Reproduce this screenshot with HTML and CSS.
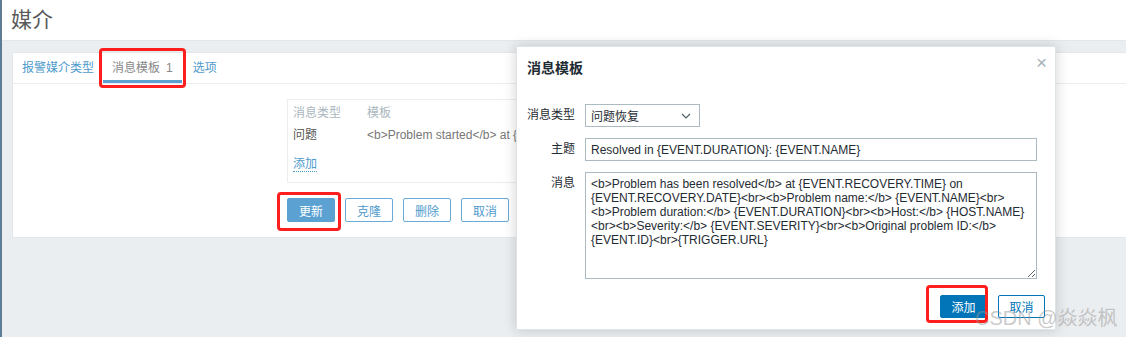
FILE: index.html
```html
<!DOCTYPE html>
<html lang="zh">
<head>
    <meta charset="UTF-8">
    <meta name="viewport" content="width=device-width, initial-scale=1.0">
    <title>媒介</title>
    <link rel="stylesheet" href="styles.css">
</head>
<body>
<div class="app">
    <header class="page-header">
        <h1>媒介</h1>
    </header>

    <main class="page">
        <section class="card">
            <nav class="tabs">
                <a class="tab">报警媒介类型</a>
                <a class="tab active">消息模板<span class="tab-count">1</span></a>
                <a class="tab">选项</a>
            </nav>
            <div class="tab-body">
                <div class="tpl-list">
                    <div class="tpl-row head">
                        <span class="col-type">消息类型</span>
                        <span>模板</span>
                    </div>
                    <div class="tpl-row">
                        <span class="col-type">问题</span>
                        <span class="tpl-text">&lt;b&gt;Problem started&lt;/b&gt; at {EVENT.TIME} on {EVENT.DATE}&lt;br&gt;&lt;b&gt;Problem name:&lt;/b&gt; {EVENT.NAME}</span>
                    </div>
                    <div class="tpl-add"><a class="link-dotted">添加</a></div>
                </div>
                <div class="actions">
                    <button class="btn primary">更新</button>
                    <button class="btn">克隆</button>
                    <button class="btn">删除</button>
                    <button class="btn">取消</button>
                </div>
            </div>
        </section>
    </main>

    <div class="dialog">
        <div class="dialog-head">
            <h2>消息模板</h2>
            <span class="dialog-close">&times;</span>
        </div>
        <div class="dialog-form">
            <label class="form-label">消息类型</label>
            <div class="select">
                <span>问题恢复</span>
                <svg width="10" height="6" viewBox="0 0 10 6"><path d="M1 1 L5 5 L9 1" fill="none" stroke="#4f5f69" stroke-width="1.2"/></svg>
            </div>

            <label class="form-label">主题</label>
            <input class="text-input" type="text" value="Resolved in {EVENT.DURATION}: {EVENT.NAME}">

            <label class="form-label">消息</label>
            <textarea class="text-area" wrap="off">&lt;b&gt;Problem has been resolved&lt;/b&gt; at {EVENT.RECOVERY.TIME} on
{EVENT.RECOVERY.DATE}&lt;br&gt;&lt;b&gt;Problem name:&lt;/b&gt; {EVENT.NAME}&lt;br&gt;
&lt;b&gt;Problem duration:&lt;/b&gt; {EVENT.DURATION}&lt;br&gt;&lt;b&gt;Host:&lt;/b&gt; {HOST.NAME}
&lt;br&gt;&lt;b&gt;Severity:&lt;/b&gt; {EVENT.SEVERITY}&lt;br&gt;&lt;b&gt;Original problem ID:&lt;/b&gt;
{EVENT.ID}&lt;br&gt;{TRIGGER.URL}</textarea>
        </div>
        <div class="dialog-foot">
            <button class="btn dialog-btn main">添加</button>
            <button class="btn dialog-btn">取消</button>
        </div>
    </div>

    <div class="mark mark-tab"></div>
    <div class="mark mark-update"></div>
    <div class="mark mark-add"></div>

    <div class="watermark">CSDN @焱焱枫</div>
</div>
</body>
</html>
```

FILE: styles.css
```css
body {
    margin: 0;
    background-color: #ebeef0;
    font-family: "Liberation Sans", Arial, "Noto Sans CJK SC", sans-serif;
    font-size: 12px;
    color: #1f2c33;
}
.app {
    position: relative;
    height: 337px;
    overflow: hidden;
    border-left: 2px solid #5f7c95;
}
.page-header {
    height: 40px;
    background: #fff;
    border-bottom: 1px solid #e3e7ea;
    padding-left: 9px;
}
.page-header h1 {
    margin: 0;
    font-size: 21px;
    font-weight: normal;
    line-height: 40px;
    color: #5a5a5a;
}
.page {
    padding: 11px 0 0 10px;
}
.card {
    background: #fff;
    border: 1px solid #e3e7ea;
    border-right: none;
    height: 184px;
}
.tabs {
    display: flex;
    height: 30px;
    border-bottom: 1px solid #ebeef0;
}
.tab {
    padding: 0 9px;
    line-height: 30px;
    color: #4f9bcc;
    box-sizing: border-box;
}
.tab.active {
    color: #888;
    border-bottom: 3px solid #5ba0cf;
    margin-right: 2px;
}
.tab-count {
    margin-left: 6px;
}
.tab-body {
    padding: 15px 0 0 274px;
}
.tpl-list {
    width: 560px;
    border: 1px solid #ebeef0;
    padding: 2px 5px 7px;
    box-sizing: border-box;
    height: 84px;
}
.tpl-row {
    display: flex;
    height: 22px;
    line-height: 22px;
    white-space: nowrap;
    overflow: hidden;
    color: #555;
}
.tpl-row.head {
    color: #aab6bd;
}
.col-type {
    width: 74px;
    flex: none;
}
.tpl-text {
    color: #777;
}
.tpl-add {
    margin-top: 7px;
    height: 22px;
    line-height: 22px;
}
.link-dotted {
    color: #4f9bcc;
    border-bottom: 1px dotted #4f9bcc;
}
.actions {
    display: flex;
    gap: 10px;
    margin-top: 15px;
}
.btn {
    height: 24px;
    width: 48px;
    padding: 0;
    border: 1px solid #6aaad6;
    border-radius: 2px;
    background: #fff;
    color: #4f9bcc;
    font-family: inherit;
    font-size: 12px;
    cursor: pointer;
}
.btn.primary {
    background: #5ba2d2;
    border-color: #5ba2d2;
    color: #fff;
}

/* dialog */
.dialog {
    position: absolute;
    left: 514px;
    top: 46px;
    width: 540px;
    height: 284px;
    box-sizing: border-box;
    background: #fff;
    border: 1px solid #dfe4e7;
    box-shadow: 0 0 12px rgba(0, 0, 0, 0.18);
}
.dialog-head {
    display: flex;
    justify-content: space-between;
    padding: 11px 10px 0 10px;
}
.dialog-head h2 {
    margin: 0;
    font-size: 14px;
    line-height: 20px;
    font-weight: bold;
}
.dialog-close {
    color: #a8b2b8;
    font-size: 19px;
    line-height: 14px;
    margin-top: -2px;
    margin-right: -2px;
}
.dialog-form {
    display: grid;
    grid-template-columns: 48px 452px;
    column-gap: 10px;
    row-gap: 11px;
    padding: 26px 0 0 10px;
}
.form-label {
    text-align: right;
    line-height: 23px;
    white-space: nowrap;
}
.select {
    width: 115px;
    height: 23px;
    box-sizing: border-box;
    border: 1px solid #acbbc2;
    display: flex;
    align-items: center;
    justify-content: space-between;
    padding: 0 8px 0 5px;
}
.text-input {
    height: 23px;
    box-sizing: border-box;
    border: 1px solid #acbbc2;
    padding: 0 5px;
    font-family: inherit;
    font-size: 12px;
    color: #1f2c33;
    margin: 0;
}
.text-area {
    height: 107px;
    box-sizing: border-box;
    border: 1px solid #acbbc2;
    padding: 4px 5px;
    font-family: inherit;
    font-size: 12px;
    line-height: 14px;
    color: #1f2c33;
    margin: 0;
    overflow: hidden;
    resize: both;
}
.dialog-foot {
    display: flex;
    justify-content: flex-end;
    gap: 11px;
    padding: 16px 10px 0 0;
}
.dialog-btn {
    height: 23px;
    width: 47px;
    border-color: #0275b8;
    color: #0275b8;
}
.dialog-btn.main {
    background: #0275b8;
    color: #fff;
}

/* red annotation boxes */
.mark {
    position: absolute;
    border: 3px solid #ff1e1e;
    border-radius: 4px;
    box-sizing: border-box;
}
.mark-tab {
    left: 97px;
    top: 48px;
    width: 87px;
    height: 40px;
}
.mark-update {
    left: 275px;
    top: 192px;
    width: 64px;
    height: 39px;
}
.mark-add {
    left: 924px;
    top: 285px;
    width: 62px;
    height: 38px;
}
.watermark {
    position: absolute;
    left: 973px;
    top: 302px;
    font-size: 20px;
    color: rgba(150, 150, 150, 0.5);
    white-space: nowrap;
}
```
